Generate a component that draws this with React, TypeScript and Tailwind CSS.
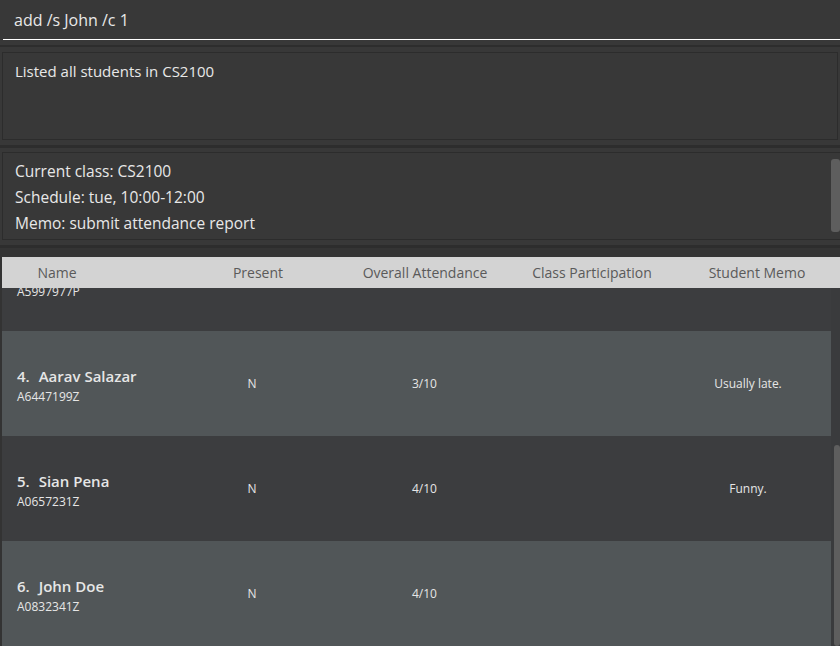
import React from "react";

const font = { fontFamily: '"Open Sans", "Noto Sans", sans-serif' };

type Row = { idx: number; name: string; id: string; present: string; att: string; memo: string; light: boolean; hidden?: boolean };

const rows: Row[] = [
  { idx: 3, name: "", id: "A5997977P", present: "", att: "", memo: "", light: false, hidden: true },
  { idx: 4, name: "Aarav Salazar", id: "A6447199Z", present: "N", att: "3/10", memo: "Usually late.", light: true },
  { idx: 5, name: "Sian Pena", id: "A0657231Z", present: "N", att: "4/10", memo: "Funny.", light: false },
  { idx: 6, name: "John Doe", id: "A0832341Z", present: "N", att: "4/10", memo: "", light: true },
];

function StudentRow({ r }: { r: Row }) {
  return (
    <div className={`h-[105px] flex items-center ${r.light ? "bg-[#515658]" : "bg-[#3c3d3f]"}`}>
      <div className="w-[165px] pl-[15px] pt-[4px] flex flex-col">
        <div className="text-[15px] font-semibold text-[#e6e6e6] leading-[20px] whitespace-nowrap h-[20px] flex">
          {r.hidden ? null : (
            <>
              <span>{r.idx}.</span>
              <span className="ml-[9px]">{r.name}</span>
            </>
          )}
        </div>
        <div className="text-[12px] text-[#e6e6e6] leading-[18px] mt-[2px]">{r.id}</div>
      </div>
      <div className="w-[170px] text-center text-[12px] text-[#e6e6e6]">{r.present}</div>
      <div className="w-[175px] text-center text-[12px] text-[#e6e6e6]">{r.att}</div>
      <div className="w-[157px] text-center text-[12px] text-[#e6e6e6]"></div>
      <div className="w-[158px] text-center text-[12px] text-[#e6e6e6]">{r.memo}</div>
    </div>
  );
}

export default function App() {
  return (
    <div className="w-[840px] h-[646px] bg-[#383838] overflow-hidden flex flex-col" style={font}>
      {/* command box */}
      <div className="h-[40px] flex flex-col bg-[#383838]">
        <div className="h-[39px] flex items-center pl-[14px] text-[16px] text-[#e8e8e8]">add /s John /c 1</div>
        <div className="h-[1px] ml-[3px] bg-white" />
      </div>
      <div className="h-[5px]" />
      <div className="h-[2px] bg-[#2d2d2d]" />
      {/* result box */}
      <div className="px-[2px] pt-[5px] pb-[5px]">
        <div className="h-[88px] border border-[#2c2c2c] pl-[12px] pt-[7px] text-[15px] text-[#e8e8e8]">
          Listed all students in CS2100
        </div>
      </div>
      <div className="h-[3px] bg-[#2d2d2d]" />
      {/* info box */}
      <div className="pl-[2px] pt-[4px] pb-[5px]">
        <div className="h-[88px] border border-r-0 border-[#2c2c2c] pl-[12px] text-[15.5px] text-[#e8e8e8] leading-[26px] flex">
          <div className="flex-1 pt-[5px]">
            <div>Current class: CS2100</div>
            <div>Schedule: tue, 10:00-12:00</div>
            <div>Memo: submit attendance report</div>
          </div>
          <div className="w-[9px] pt-[6px]">
            <div className="w-[9px] h-[73px] rounded-[3px] bg-[#5e5e5e]" />
          </div>
        </div>
      </div>
      <div className="h-[3px] bg-[#2d2d2d]" />
      <div className="h-[9px] bg-[#343434]" />
      {/* table */}
      <div className="flex-1 relative overflow-hidden bg-[#333333] pl-[2px]">
        <div className="flex h-full">
          <div className="w-[829px] h-full overflow-hidden">
            <div className="mt-[-31px]">
              {rows.map((r) => (
                <StudentRow key={r.idx} r={r} />
              ))}
            </div>
          </div>
          <div className="w-[9px] h-full bg-[#3a3b3d] relative">
            <div className="absolute left-[3px] right-0 top-[188px] bottom-0 rounded-[3px] bg-[#5e5e5e]" />
          </div>
        </div>
        {/* header overlay */}
        <div className="absolute left-[2px] right-0 top-0 h-[31px] bg-[#d3d3d3] text-[14px] text-[#5a5a5a] leading-[31px]">
          <div className="absolute left-0 w-[110px] text-center">Name</div>
          <div className="absolute left-[223px] w-[66px] text-center">Present</div>
          <div className="absolute left-[353px] w-[140px] text-center">Overall Attendance</div>
          <div className="absolute left-[520px] w-[140px] text-center">Class Participation</div>
          <div className="absolute left-[695px] w-[120px] text-center">Student Memo</div>
        </div>
      </div>
    </div>
  );
}
